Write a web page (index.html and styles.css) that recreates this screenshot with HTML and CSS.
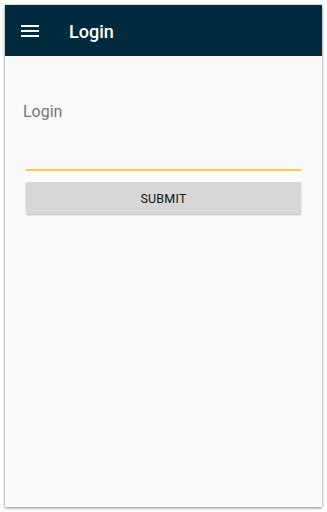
FILE: index.html
```html
<!DOCTYPE html>
<html>
<head>
<meta charset="utf-8">
<link rel="stylesheet" href="styles.css">
</head>
<body>
<div class="device">
  <header class="appbar">
    <svg class="menu" width="18" height="12" viewBox="0 0 18 12">
      <rect x="0" y="0" width="18" height="2" fill="#fff"/>
      <rect x="0" y="5" width="18" height="2" fill="#fff"/>
      <rect x="0" y="10" width="18" height="2" fill="#fff"/>
    </svg>
    <span class="title">Login</span>
  </header>
  <main class="content">
    <div class="label">Login</div>
    <div class="field"></div>
    <button class="submit">SUBMIT</button>
  </main>
</div>
</body>
</html>
```
FILE: styles.css
```css
html, body {
  margin: 0;
  padding: 0;
  background: #ffffff;
  font-family: Roboto, "Liberation Sans", sans-serif;
}
body {
  padding: 5px;
  width: 317px;
  height: 502px;
}
.device {
  width: 317px;
  height: 502px;
  background: #fafafa;
  box-shadow: 0 1px 3px rgba(0,0,0,0.45), 0 0 1px rgba(0,0,0,0.3);
  display: flex;
  flex-direction: column;
}
.appbar {
  height: 51px;
  background: #022a3e;
  display: flex;
  align-items: center;
  padding-left: 16px;
  flex: none;
}
.menu {
  display: block;
  margin-top: 1px;
}
.title {
  color: #ffffff;
  font-weight: 500;
  font-size: 18px;
  margin-left: 30px;
  margin-top: 1px;
}
.content {
  padding: 46px 21px 0 18px;
  display: flex;
  flex-direction: column;
}
.label {
  color: #777777;
  font-size: 16px;
  line-height: 19px;
}
.field {
  margin: 48px 0 0 3px;
  height: 2px;
  background: #fcc94f;
}
.submit {
  margin: 11px 0 0 3px;
  height: 32px;
  border: none;
  border-radius: 2px;
  background: #d6d7d6;
  box-shadow: 0 1px 2px rgba(0,0,0,0.25);
  font-family: Roboto, "Liberation Sans", sans-serif;
  font-size: 12.5px;
  font-weight: 400;
  color: #111111;
  letter-spacing: 0.2px;
  padding: 0;
}
```
